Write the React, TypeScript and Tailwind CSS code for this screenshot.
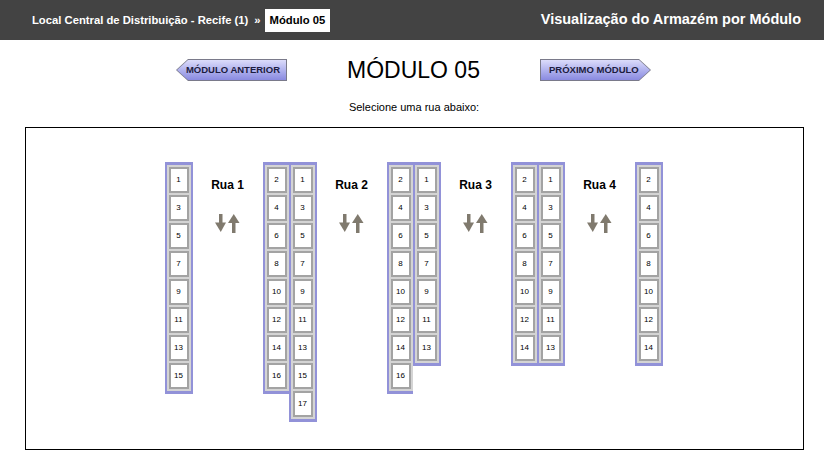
const font = "font-['Liberation_Sans',Arial,sans-serif]";

function Cell({ n }: { n: number }) {
  return (
    <div className="w-[20px] h-[26px] border-2 border-[#a3a3a3] bg-white flex items-center justify-center text-[8px] text-black">
      {n}
    </div>
  );
}

function Col({ nums, last }: { nums: number[]; last?: boolean }) {
  return (
    <div
      className={
        last
          ? "border-l-2 border-r-2 border-t-[3px] border-b-[3px] border-[#9292d8] bg-[#d4d4d4] p-[2px] flex flex-col gap-[2px]"
          : "border-l-2 border-t-[3px] border-b-[3px] border-[#9292d8] bg-[#d4d4d4] p-[2px] flex flex-col gap-[2px]"
      }
    >
      {nums.map((n) => (
        <Cell key={n} n={n} />
      ))}
    </div>
  );
}

function ArrowsIcon() {
  return (
    <svg width="25" height="19" viewBox="0 0 25 19" fill="#807a6e">
      <rect x="4" y="0" width="3.5" height="10" />
      <polygon points="0,8.5 11,8.5 5.75,18" />
      <polygon points="13,9 24.5,9 18.75,0" />
      <rect x="17" y="7" width="3.5" height="12" />
    </svg>
  );
}

function Rua({ n }: { n: number }) {
  return (
    <div className="w-[70px] flex flex-col items-center pt-[16px]">
      <div className="text-[12px] font-bold leading-[14px] text-black">Rua {n}</div>
      <div className="mt-[22px]">
        <ArrowsIcon />
      </div>
    </div>
  );
}

const range = (a: number, b: number) => {
  const r: number[] = [];
  for (let i = a; i <= b; i += 2) r.push(i);
  return r;
};

export default function App() {
  return (
    <div className={`${font} w-[824px] h-[452px] bg-white overflow-hidden`}>
      {/* Top bar */}
      <div className="h-[40px] bg-[#434343] flex items-center justify-between pl-[32px] pr-[23px]">
        <div className="flex items-center text-[11.25px] font-bold text-white">
          <span>Local Central de Distribuição - Recife (1)</span>
          <span className="ml-[6px] mr-[4px]">»</span>
          <span className="bg-white text-black h-[23px] px-[5px] flex items-center">Módulo 05</span>
        </div>
        <div className="text-[14.5px] font-bold text-white">Visualização do Armazém por Módulo</div>
      </div>

      {/* Module navigation */}
      <div className="mt-[18px] h-[24px] flex items-center justify-center gap-[60px] pl-[3px]">
        <div className="[clip-path:polygon(0_50%,12px_0,100%_0,100%_100%,12px_100%)] bg-[#7a7a8a] p-[1px] w-[111px] h-[22px]">
          <div className="[clip-path:polygon(0_50%,11px_0,100%_0,100%_100%,11px_100%)] w-full h-full bg-gradient-to-b from-[#dcdcfa] to-[#8a8ae0] flex items-center justify-end pr-[6px] text-[9.5px] font-bold text-[#1c1c40]">
            MÓDULO ANTERIOR
          </div>
        </div>
        <div className="w-[133px] text-center text-[23px] leading-[24px] text-black whitespace-nowrap">MÓDULO 05</div>
        <div className="[clip-path:polygon(0_0,calc(100%-12px)_0,100%_50%,calc(100%-12px)_100%,0_100%)] bg-[#7a7a8a] p-[1px] w-[111px] h-[22px]">
          <div className="[clip-path:polygon(0_0,calc(100%-11px)_0,100%_50%,calc(100%-11px)_100%,0_100%)] w-full h-full bg-gradient-to-b from-[#dcdcfa] to-[#8a8ae0] flex items-center pl-[8px] text-[9.5px] font-bold text-[#1c1c40]">
            PRÓXIMO MÓDULO
          </div>
        </div>
      </div>

      <div className="mt-[19px] pl-[4px] text-center text-[11px] leading-[12px] text-black">Selecione uma rua abaixo:</div>

      {/* Streets */}
      <div className="mt-[14px] ml-[25px] w-[779px] h-[323px] border border-black flex justify-center items-start pt-[34px] pr-[2px]">
        <Col nums={range(1, 15)} last />
        <Rua n={1} />
        <div className="flex items-start">
          <Col nums={range(2, 16)} />
          <Col nums={range(1, 17)} last />
        </div>
        <Rua n={2} />
        <div className="flex items-start">
          <Col nums={range(2, 16)} />
          <Col nums={range(1, 13)} last />
        </div>
        <Rua n={3} />
        <div className="flex items-start">
          <Col nums={range(2, 14)} />
          <Col nums={range(1, 13)} last />
        </div>
        <Rua n={4} />
        <Col nums={range(2, 14)} last />
      </div>
    </div>
  );
}
